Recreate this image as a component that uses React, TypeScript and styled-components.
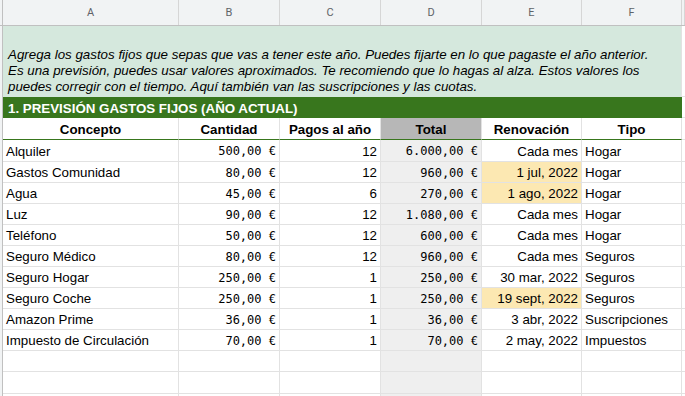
import { createGlobalStyle } from 'styled-components';
import styled, { css } from 'styled-components';

const GlobalStyle = createGlobalStyle`
    html, body {
        margin: 0;
        padding: 0;
        background: #ffffff;
        overflow: hidden;
    }
    body {
        font-family: 'Liberation Sans', Arial, sans-serif;
        color: #000;
    }
`;

const COLUMNS = '3px 176px 101px 101px 101px 100px 100px 1fr';
const GRID = '#e2e2e2';
const HEAD_BG = '#f1f3f4';
const DARK_GREEN = '#38761d';

type Align = 'left' | 'center' | 'right';

interface Gasto {
    concepto: string;
    cantidad: string;
    pagos: number;
    total: string;
    renovacion: string;
    tipo: string;
    highlight?: boolean;
}

const gastos: Gasto[] = [
    { concepto: 'Alquiler', cantidad: '500,00 €', pagos: 12, total: '6.000,00 €', renovacion: 'Cada mes', tipo: 'Hogar' },
    { concepto: 'Gastos Comunidad', cantidad: '80,00 €', pagos: 12, total: '960,00 €', renovacion: '1 jul, 2022', tipo: 'Hogar', highlight: true },
    { concepto: 'Agua', cantidad: '45,00 €', pagos: 6, total: '270,00 €', renovacion: '1 ago, 2022', tipo: 'Hogar', highlight: true },
    { concepto: 'Luz', cantidad: '90,00 €', pagos: 12, total: '1.080,00 €', renovacion: 'Cada mes', tipo: 'Hogar' },
    { concepto: 'Teléfono', cantidad: '50,00 €', pagos: 12, total: '600,00 €', renovacion: 'Cada mes', tipo: 'Hogar' },
    { concepto: 'Seguro Médico', cantidad: '80,00 €', pagos: 12, total: '960,00 €', renovacion: 'Cada mes', tipo: 'Seguros' },
    { concepto: 'Seguro Hogar', cantidad: '250,00 €', pagos: 1, total: '250,00 €', renovacion: '30 mar, 2022', tipo: 'Seguros' },
    { concepto: 'Seguro Coche', cantidad: '250,00 €', pagos: 1, total: '250,00 €', renovacion: '19 sept, 2022', tipo: 'Seguros', highlight: true },
    { concepto: 'Amazon Prime', cantidad: '36,00 €', pagos: 1, total: '36,00 €', renovacion: '3 abr, 2022', tipo: 'Suscripciones' },
    { concepto: 'Impuesto de Circulación', cantidad: '70,00 €', pagos: 1, total: '70,00 €', renovacion: '2 may, 2022', tipo: 'Impuestos' }
];

const letters = ['A', 'B', 'C', 'D', 'E', 'F', ''];
const headers = ['Concepto', 'Cantidad', 'Pagos al año', 'Total', 'Renovación', 'Tipo'];

const App = () => {
    return (
        <>
            <GlobalStyle />
            <Sheet>
                <LetterRow>
                    <Strip />
                    {letters.map((l, i) => (
                        <Letter key={i}>{l}</Letter>
                    ))}
                </LetterRow>

                <Row $h={71}>
                    <Strip />
                    <Band>
                        <p>
                            Agrega los gastos fijos que sepas que vas a tener este año. Puedes fijarte en lo que pagaste el año anterior.
                            <br />
                            Es una previsión, puedes usar valores aproximados. Te recomiendo que lo hagas al alza. Estos valores los puedes corregir con el
                            tiempo. Aquí también van las suscripciones y las cuotas.
                        </p>
                    </Band>
                    <Cell />
                </Row>

                <Row $h={21}>
                    <Strip />
                    <Section>1. PREVISIÓN GASTOS FIJOS (AÑO ACTUAL)</Section>
                    <Cell />
                </Row>

                <Row $h={22}>
                    <Strip />
                    {headers.map((h, i) => (
                        <HeadCell key={h} $bg={i === 3 ? '#b7b7b7' : undefined}>
                            {h}
                        </HeadCell>
                    ))}
                    <Cell />
                </Row>

                {gastos.map((g, i) => (
                    <Row key={g.concepto} $h={i === 0 ? 22 : 21}>
                        <Strip />
                        <Cell>{g.concepto}</Cell>
                        <Cell $align="right" $mono>
                            {g.cantidad}
                        </Cell>
                        <Cell $align="right">{g.pagos}</Cell>
                        <Cell $align="right" $mono $bg="#efefef">
                            {g.total}
                        </Cell>
                        <Cell $align="right" $bg={g.highlight ? '#fce8b2' : undefined}>
                            {g.renovacion}
                        </Cell>
                        <Cell>{g.tipo}</Cell>
                        <Cell />
                    </Row>
                ))}

                {[0, 1, 2].map((k) => (
                    <Row key={k} $h={k === 1 ? 22 : 21}>
                        <Strip />
                        <Cell />
                        <Cell />
                        <Cell />
                        <Cell $bg="#efefef" />
                        <Cell />
                        <Cell />
                        <Cell />
                    </Row>
                ))}
            </Sheet>
        </>
    );
};

const Sheet = styled.div`
    width: 685px;
    height: 396px;
    overflow: hidden;
    display: flex;
    flex-direction: column;
    font-size: 13.33px;
`;

const Row = styled.div<{ $h: number }>`
    display: grid;
    grid-template-columns: ${COLUMNS};
    height: ${({ $h }) => $h}px;
    flex-shrink: 0;
`;

const LetterRow = styled(Row).attrs({ $h: 26 })`
    background: ${HEAD_BG};
    border-bottom: 1px solid #c0c0c0;
    box-sizing: border-box;
`;

const Strip = styled.div`
    background: ${HEAD_BG};
    border-right: 1px solid #c0c0c0;
`;

const Letter = styled.div`
    display: flex;
    align-items: center;
    justify-content: center;
    border-right: 1px solid #d6d6d6;
    font-family: Roboto, 'Liberation Sans', sans-serif;
    font-size: 11px;
    color: #5f6368;
`;

const Cell = styled.div<{ $align?: Align; $bg?: string; $mono?: boolean }>`
    display: flex;
    align-items: center;
    justify-content: ${({ $align }) => ($align === 'right' ? 'flex-end' : $align === 'center' ? 'center' : 'flex-start')};
    padding: 1px 3px 0;
    box-sizing: border-box;
    border-right: 1px solid ${GRID};
    border-bottom: 1px solid ${GRID};
    background: ${({ $bg }) => $bg || '#ffffff'};
    white-space: nowrap;
    overflow: hidden;
    ${({ $mono }) =>
        $mono &&
        css`
            font-family: 'DejaVu Sans Mono', 'Liberation Mono', monospace;
            font-size: 12px;
        `}
`;

const HeadCell = styled(Cell).attrs({ $align: 'center' as Align })`
    font-weight: bold;
    border-bottom: 1px solid ${DARK_GREEN};
`;

const Band = styled.div`
    grid-column: 2 / 8;
    background: #d5e8dd;
    border-right: 1px solid ${GRID};
    font-style: italic;
    line-height: 16px;
    padding: 0 8px 2px 5px;
    display: flex;
    align-items: flex-end;
    box-sizing: border-box;

    p {
        margin: 0;
    }
`;

const Section = styled.div`
    grid-column: 2 / 8;
    background: ${DARK_GREEN};
    color: #ffffff;
    font-weight: bold;
    display: flex;
    align-items: center;
    padding: 1px 5px 0;
    box-sizing: border-box;
`;

export default App;
